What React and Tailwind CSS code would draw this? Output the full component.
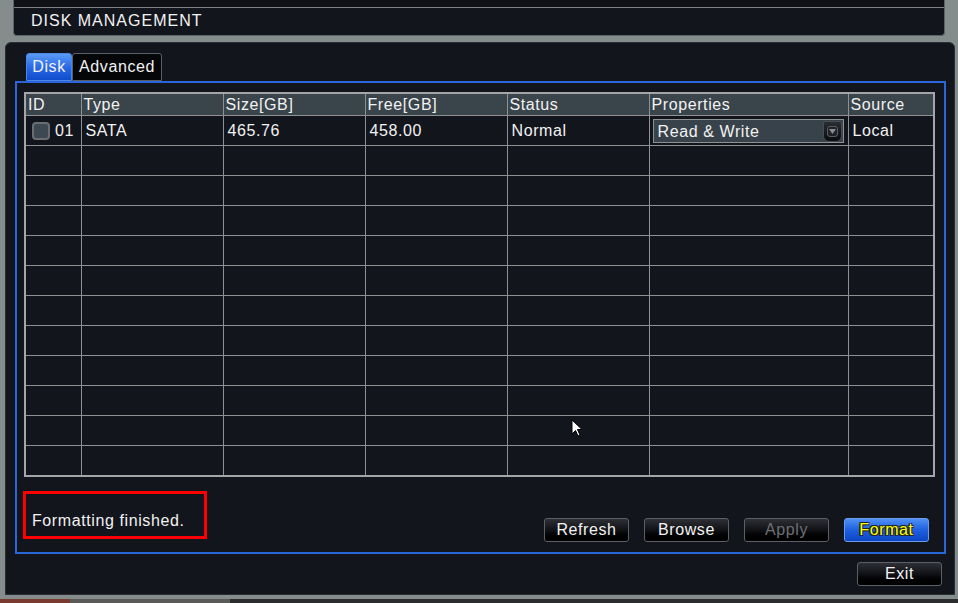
const cols = [56, 142, 142, 142, 142, 199, 86]
const heads = ['ID', 'Type', 'Size[GB]', 'Free[GB]', 'Status', 'Properties', 'Source']

function Btn({ children, muted, primary, className = '' }) {
  const base = primary
    ? 'bg-gradient-to-b from-[#4f8ff5] via-[#1e5fe0] to-[#0c45c4] border-[#6a9cf0] text-[#ffff00] [text-shadow:1px_1px_0_#222,-1px_-1px_0_#222,1px_-1px_0_#222,-1px_1px_0_#222]'
    : 'bg-gradient-to-b from-[#2e3036] via-[#111216] to-[#000000] border-[#5c5f66] ' + (muted ? 'text-[#6e7074]' : 'text-[#f2f2f2]')
  return (
    <div className={`w-[85px] h-[24px] rounded-[3px] border flex items-center justify-center text-[16px] tracking-[0.6px] ${base} ${className}`}>
      {children}
    </div>
  )
}

export default function App() {
  const rows = Array.from({ length: 12 }, (_, i) => i)
  return (
    <div className="relative w-[958px] h-[603px] overflow-hidden bg-[#848c8c] text-[#f2f2f2] text-[16px] tracking-[0.6px]" style={{ fontFamily: '"Liberation Sans", Arial, sans-serif' }}>
      {/* title bar */}
      <div className="ml-[13px] w-[932px] h-[36px] bg-[#13151d] border-x border-b border-[#5d6369] rounded-b-[4px] flex flex-col">
        <div className="h-[7px] bg-[#0f1117]" />
        <div className="h-[1px] bg-[#7c8286]" />
        <div className="flex-1 flex items-center pl-[17px] tracking-[1px] text-[16px] pb-[1px]">DISK MANAGEMENT</div>
      </div>

      {/* main panel */}
      <div className="mt-[6px] ml-[5px] w-[950px] h-[553px] bg-[#13151d] border border-[#2a2d33] rounded-t-[6px] flex flex-col">
        <div className="flex pl-[20px] pt-[10px] h-[38px] items-end">
          <div className="w-[46px] h-[28px] rounded-t-[3px] bg-gradient-to-b from-[#5a9af5] via-[#2a6ae6] to-[#0f4ccc] border border-[#4d86e8] flex items-center justify-center">Disk</div>
          <div className="w-[90px] h-[28px] rounded-t-[3px] bg-[#050608] border border-[#5c6066] flex items-center justify-center">Advanced</div>
        </div>

        <div className="ml-[9px] w-[931px] h-[473px] border-2 border-[#2a66da] flex flex-col pl-[7px] pt-[9px]">
          <table className="table-fixed border-collapse border-2 border-[#a3a5a7]" style={{ width: 910 }}>
            <colgroup>
              {cols.map((w, i) => <col key={i} style={{ width: w }} />)}
            </colgroup>
            <thead>
              <tr className="h-[22px] bg-[#3a444b]">
                {heads.map(h => (
                  <th key={h} className="border border-[#8e9092] text-left font-normal px-[2px] align-top pt-[1px] leading-[20px]">{h}</th>
                ))}
              </tr>
            </thead>
            <tbody>
              <tr className="h-[30px]">
                <td className="border border-[#8e9092] px-[6px]">
                  <div className="flex items-center gap-[5px]">
                    <div className="w-[18px] h-[18px] rounded-[4px] bg-[#3c4852] border-2 border-[#6a6d71]" />
                    <span>01</span>
                  </div>
                </td>
                <td className="border border-[#8e9092] px-[4px]">SATA</td>
                <td className="border border-[#8e9092] px-[4px]">465.76</td>
                <td className="border border-[#8e9092] px-[4px]">458.00</td>
                <td className="border border-[#8e9092] px-[4px]">Normal</td>
                <td className="border border-[#8e9092] pl-[3px] pr-[4px]">
                  <div className="h-[24px] border border-[#8e9092] bg-[#38424a] flex items-center justify-between pl-[4px] pr-[1px] mt-[1px]">
                    <span className="pt-[2px]">Read &amp; Write</span>
                    <div className="w-[19px] h-[21px] rounded-b-[6px] rounded-t-[2px] bg-gradient-to-b from-[#2a2d33] to-[#0a0b0e] border border-[#4a4d53] flex items-center justify-center">
                      <div className="w-[11px] h-[11px] rounded-[3px] bg-[#1d2025] border border-[#5a5e64] flex items-center justify-center">
                        <svg width="7" height="5" viewBox="0 0 7 5"><path d="M0 0 H7 L3.5 5 Z" fill="#8a8e94" /></svg>
                      </div>
                    </div>
                  </div>
                </td>
                <td className="border border-[#8e9092] px-[4px]">Local</td>
              </tr>
              {rows.slice(1).map(r => (
                <tr key={r} className="h-[30px]">
                  {cols.map((_, i) => <td key={i} className="border border-[#8e9092]" />)}
                </tr>
              ))}
            </tbody>
          </table>

          <div className="flex items-end mt-[14px] pr-[15px]">
            <div className="w-[184px] h-[48px] border-[3px] border-[#ff0000] flex items-end pl-[6px] pb-[3px] -ml-[1px]">
              Formatting finished.
            </div>
            <div className="flex-1" />
            <div className="flex gap-[15px] -mb-[3px]">
              <Btn>Refresh</Btn>
              <Btn>Browse</Btn>
              <Btn muted>Apply</Btn>
              <Btn primary>Format</Btn>
            </div>
          </div>
        </div>

        <div className="flex justify-end pr-[12px] mt-[8px]">
          <Btn>Exit</Btn>
        </div>
      </div>

      {/* bottom background strip */}
      <div className="mt-[4px] h-[4px] flex">
        <div className="w-[70px] bg-[#7a3a30]" />
        <div className="w-[160px] bg-[#5a5a58]" />
        <div className="flex-1 bg-[#2a2c2e]" />
      </div>

      {/* mouse cursor */}
      <svg className="absolute left-[571px] top-[419px]" width="12" height="20" viewBox="0 0 12 20">
        <path d="M1 1 V15 L4.5 11.5 L7 17 L9 16 L6.5 10.5 H11 Z" fill="#ffffff" stroke="#000000" strokeWidth="1" />
      </svg>
    </div>
  )
}
